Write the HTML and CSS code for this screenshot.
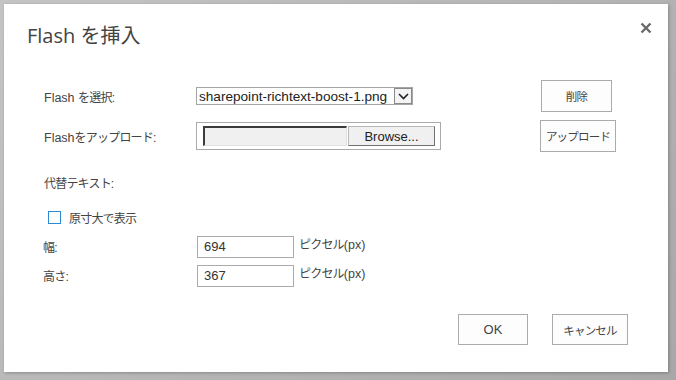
FILE: index.html
```html
<!DOCTYPE html>
<html lang="ja">
  <head>
    <meta charset="UTF-8" />
    <meta name="viewport" content="width=device-width, initial-scale=1.0" />
    <title>Flash を挿入</title>
    <link rel="stylesheet" href="styles.css">
  </head>
  <body>
    <div class="dialog">
      <div class="dialog-head">
        <h1 class="dialog-title">Flash を挿入</h1>
        <button class="close-btn" title="閉じる">
          <svg width="12" height="12" viewBox="0 0 12 12">
            <path d="M1.5 1.5 L10.5 10.5 M10.5 1.5 L1.5 10.5" stroke="#6a6a6a" stroke-width="2.4" fill="none" />
          </svg>
        </button>
      </div>

      <div class="row row-select">
        <span class="label"><span class="latin">Flash </span>を選択:</span>
        <div class="control">
          <div class="select">
            <span class="select-text">sharepoint-richtext-boost-1.png</span>
            <span class="select-arrow">
              <svg width="11" height="7" viewBox="0 0 11 7">
                <path d="M1 1 L5.5 5.5 L10 1" stroke="#222" stroke-width="1.6" fill="none" />
              </svg>
            </span>
          </div>
        </div>
        <button class="btn btn-delete">削除</button>
      </div>

      <div class="row row-upload">
        <span class="label"><span class="latin">Flash</span>をアップロード:</span>
        <div class="control">
          <div class="file-input">
            <span class="file-field"></span>
            <span class="file-browse">Browse...</span>
          </div>
        </div>
        <button class="btn btn-upload">アップロード</button>
      </div>

      <div class="row row-alt">
        <span class="label">代替テキスト:</span>
      </div>

      <div class="row row-check">
        <span class="checkbox"></span>
        <span class="check-label">原寸大で表示</span>
      </div>

      <div class="row row-size">
        <span class="label label-size">幅:</span>
        <span class="size-input">694</span>
        <span class="unit">ピクセル<span class="latin">(px)</span></span>
      </div>

      <div class="row row-size">
        <span class="label label-size">高さ:</span>
        <span class="size-input">367</span>
        <span class="unit">ピクセル<span class="latin">(px)</span></span>
      </div>

      <div class="dialog-foot">
        <button class="btn btn-ok">OK</button>
        <button class="btn btn-cancel">キャンセル</button>
      </div>
    </div>
  </body>
</html>
```

FILE: styles.css
```css
body {
  margin: 0;
  width: 676px;
  height: 380px;
  box-sizing: border-box;
  padding: 4px 8px 8px 4px;
  background: linear-gradient(135deg, #c4c4c4, #a8a8a8);
  font-family: "Liberation Sans", "Noto Sans CJK JP", sans-serif;
  color: #444;
  font-size: 12px;
  overflow: hidden;
}

.latin {
  letter-spacing: 0;
  font-size: 12.5px;
}

.dialog {
  width: 664px;
  height: 368px;
  background: #fff;
  box-shadow: 1px 1px 3px rgba(0, 0, 0, 0.25);
  position: relative;
}

.dialog-head {
  height: 60px;
  padding-left: 23px;
  display: flex;
  align-items: center;
}

.dialog-title {
  margin: 0;
  font-family: "Open Sans", "Noto Sans CJK JP", sans-serif;
  font-weight: normal;
  font-size: 20px;
  color: #444;
}

.close-btn {
  position: absolute;
  top: 17px;
  right: 15px;
  width: 14px;
  height: 14px;
  padding: 0;
  border: none;
  background: transparent;
  display: flex;
  align-items: center;
  justify-content: center;
}

.row {
  display: flex;
  align-items: center;
  padding-left: 40px;
}

.row-select {
  margin-top: 12px;
  height: 40px;
}

.row-upload {
  height: 40px;
}

.row-alt {
  margin-top: 6px;
  height: 40px;
}

.row-check {
  height: 30px;
  padding-left: 44px;
}

.row-size {
  height: 29px;
  padding-left: 39px;
}

.label {
  width: 152px;
  flex-shrink: 0;
  letter-spacing: -0.8px;
}

.label-size {
  width: 154px;
}

.control {
  width: 345px;
  flex-shrink: 0;
}

.select {
  width: 217px;
  height: 18px;
  box-sizing: border-box;
  border: 1px solid #a5a5a5;
  display: flex;
  align-items: center;
  font-family: "Liberation Sans", sans-serif;
  font-size: 13.6px;
  color: #222;
}

.select-text {
  flex: 1;
  padding-left: 2px;
  white-space: nowrap;
}

.select-arrow {
  width: 18px;
  height: 16px;
  box-sizing: border-box;
  border: 1px solid #8a8a8a;
  background: #f4f4f4;
  display: flex;
  align-items: center;
  justify-content: center;
}

.file-input {
  width: 245px;
  height: 28px;
  box-sizing: border-box;
  border: 1px solid #ababab;
  display: flex;
  align-items: center;
  padding-left: 6px;
  gap: 1px;
}

.file-field {
  width: 144px;
  height: 20px;
  box-sizing: border-box;
  background: #f0f0f0;
  border-top: 2px solid #3c3c3c;
  border-left: 2px solid #3c3c3c;
  border-right: 1px solid #e0e0e0;
  border-bottom: 1px solid #e0e0e0;
}

.file-browse {
  width: 87px;
  height: 20px;
  box-sizing: border-box;
  background: #f0f0f0;
  border: 1px solid #b8b8b8;
  border-right-color: #707070;
  border-bottom-color: #707070;
  display: flex;
  align-items: center;
  justify-content: center;
  font-size: 13px;
  color: #222;
}

.btn {
  font-family: "Noto Sans CJK JP", "Liberation Sans", sans-serif;
  font-size: 11.5px;
  letter-spacing: -0.8px;
  color: #444;
  background: #fdfdfd;
  border: 1px solid #ababab;
  padding: 0;
  height: 32px;
}

.btn-delete {
  width: 71px;
}

.btn-upload {
  width: 76px;
  margin-left: -1px;
  margin-top: -1px;
}

.checkbox {
  width: 13px;
  height: 13px;
  box-sizing: border-box;
  border: 1px solid #2a8ad4;
  background: #fff;
  margin-right: 8px;
}

.check-label {
  letter-spacing: -0.8px;
}

.size-input {
  width: 97px;
  height: 22px;
  box-sizing: border-box;
  border: 1px solid #ababab;
  padding-left: 6px;
  display: flex;
  align-items: center;
  color: #333;
  font-size: 13px;
}

.unit {
  margin-left: 5px;
  margin-top: -6px;
  letter-spacing: -0.8px;
}

.dialog-foot {
  display: flex;
  justify-content: flex-end;
  gap: 24px;
  padding-right: 40px;
  margin-top: 24px;
}

.btn-ok {
  width: 70px;
  height: 31px;
  font-family: "Liberation Sans", sans-serif;
  font-size: 13px;
  letter-spacing: 0;
}

.btn-cancel {
  width: 76px;
  height: 31px;
}
```
